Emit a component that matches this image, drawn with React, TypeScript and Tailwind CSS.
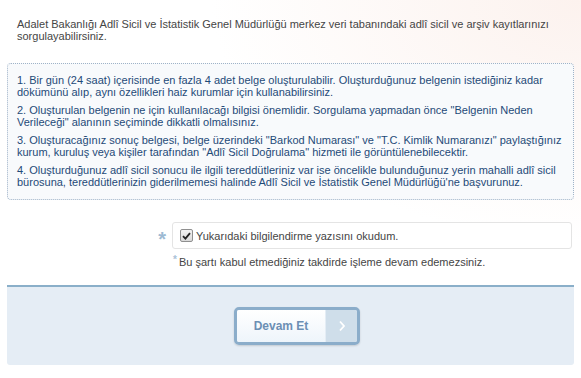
import React from "react";

const font = { fontFamily: '"Liberation Sans", Arial, sans-serif' };

function Item({ l1, l2 }: { l1: string; l2: string }) {
  return (
    <div className="mb-[6px] last:mb-0">
      <div className="whitespace-nowrap">{l1}</div>
      <div className="whitespace-nowrap">{l2}</div>
    </div>
  );
}

export default function App() {
  return (
    <div
      className="w-[581px] h-[378px] bg-white bg-[radial-gradient(ellipse_at_100%_0%,#fcf2ee_0%,#ffffff_45%)] overflow-hidden text-[11px] leading-[12px]"
      style={font}
    >
      <div className="pl-[17px] pt-[18px] text-[#454545]">
        <div className="whitespace-nowrap">
          Adalet Bakanlığı Adlî Sicil ve İstatistik Genel Müdürlüğü merkez veri tabanındaki adlî sicil ve arşiv kayıtlarınızı
        </div>
        <div className="whitespace-nowrap">sorgulayabilirsiniz.</div>
      </div>

      <div className="mx-[7px] mt-[21px] h-[137px] rounded-[4px] border border-dotted border-[#9fb3c8] bg-[#f8fafc] pl-[9px] pt-[10px] text-[#1f4a78]">
        <Item
          l1="1. Bir gün (24 saat) içerisinde en fazla 4 adet belge oluşturulabilir. Oluşturduğunuz belgenin istediğiniz kadar"
          l2="dökümünü alıp, aynı özellikleri haiz kurumlar için kullanabilirsiniz."
        />
        <Item
          l1='2. Oluşturulan belgenin ne için kullanılacağı bilgisi önemlidir. Sorgulama yapmadan önce "Belgenin Neden'
          l2='Verileceği" alanının seçiminde dikkatli olmalısınız.'
        />
        <Item
          l1='3. Oluşturacağınız sonuç belgesi, belge üzerindeki "Barkod Numarası" ve "T.C. Kimlik Numaranızı" paylaştığınız'
          l2='kurum, kuruluş veya kişiler tarafından "Adlî Sicil Doğrulama" hizmeti ile görüntülenebilecektir.'
        />
        <Item
          l1="4. Oluşturduğunuz adlî sicil sonucu ile ilgili tereddütleriniz var ise öncelikle bulunduğunuz yerin mahalli adlî sicil"
          l2="bürosuna, tereddütlerinizin giderilmemesi halinde Adlî Sicil ve İstatistik Genel Müdürlüğü'ne başvurunuz."
        />
      </div>

      <div className="mt-[22px] flex items-center">
        <div className="w-[172px] flex justify-end pr-[6px]">
          <span className="text-[#9dbad3] text-[20px] leading-[16px] font-bold mt-[6px]">*</span>
        </div>
        <div className="w-[400px] h-[27px] rounded-[3px] border border-[#e4e4e4] bg-white flex items-center pl-[7px]">
          <span className="w-[13px] h-[13px] rounded-[2px] border border-[#8f8f8f] bg-gradient-to-b from-[#f2f2f2] to-[#d9d9d9] flex items-center justify-center">
            <svg width="9" height="8" viewBox="0 0 9 8">
              <path d="M1 4.2 L3.4 6.6 L8 1.2" fill="none" stroke="#222" strokeWidth="1.8" />
            </svg>
          </span>
          <span className="ml-[3px] text-[#454545] whitespace-nowrap">Yukarıdaki bilgilendirme yazısını okudum.</span>
        </div>
      </div>

      <div className="mt-[7px] pl-[173px] flex items-start text-[#454545]">
        <span className="text-[#a9c2d8] text-[10px] leading-[9px] font-bold mr-[2px] -mt-[1px]">*</span>
        <span className="whitespace-nowrap">Bu şartı kabul etmediğiniz takdirde işleme devam edemezsiniz.</span>
      </div>

      <div className="mx-[7px] mt-[17px] h-[80px] border-t-2 border-[#8aafc9] bg-[#e5edf5] rounded-b-[3px] pt-[20px] pl-[227px]">
        <button className="w-[126px] h-[38px] rounded-[5px] border-[3px] border-[#8badca] flex overflow-hidden shadow-[0_1px_2px_rgba(0,0,0,0.15)]">
          <span className="flex-1 h-full bg-gradient-to-b from-white to-[#eef5fb] flex items-center justify-center text-[12px] font-bold text-[#6c8fb4]">
            Devam Et
          </span>
          <span className="w-[32px] h-full bg-[#cfdeea] border-l border-[#e4edf5] flex items-center justify-center">
            <svg width="8" height="12" viewBox="0 0 8 12">
              <path d="M2 1.5 L6 6 L2 10.5" fill="none" stroke="#ffffff" strokeWidth="1.8" />
            </svg>
          </span>
        </button>
      </div>
    </div>
  );
}
